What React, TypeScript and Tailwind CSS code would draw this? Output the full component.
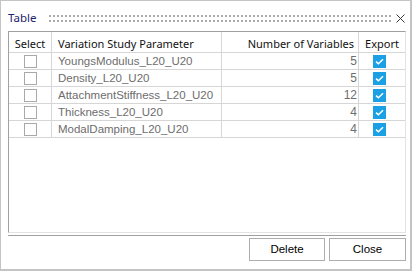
import { Fragment } from "react";

const rows = [
  { name: "YoungsModulus_L20_U20", count: 5 },
  { name: "Density_L20_U20", count: 5 },
  { name: "AttachmentStiffness_L20_U20", count: 12 },
  { name: "Thickness_L20_U20", count: 4 },
  { name: "ModalDamping_L20_U20", count: 4 },
];

const ui = { fontFamily: '"Noto Sans", "Open Sans", sans-serif' };
const arial = { fontFamily: '"Liberation Sans", Arial, sans-serif' };

function GripDots() {
  return (
    <svg className="h-[7px] flex-1" preserveAspectRatio="none">
      <defs>
        <pattern id="grip" width="4" height="5" patternUnits="userSpaceOnUse">
          <rect x="0" y="0" width="2" height="2" fill="#ababab" />
        </pattern>
      </defs>
      <rect x="0" y="0" width="100%" height="7" fill="url(#grip)" />
    </svg>
  );
}

function CloseX() {
  return (
    <svg width="9" height="9" viewBox="0 0 9 9" className="ml-[3px] mr-[1px]">
      <path d="M0.5 0.5 L8.5 8.5 M8.5 0.5 L0.5 8.5" stroke="#3c3c3c" strokeWidth="1" />
    </svg>
  );
}

function EmptyBox() {
  return <div className="w-[13px] h-[13px] border border-[#a9a9a9] bg-white" />;
}

function CheckedBox() {
  return (
    <div className="w-[13px] h-[13px] bg-[#1ba0e6] flex items-center justify-center">
      <svg width="9" height="7" viewBox="0 0 9 7">
        <path d="M1 3.6 L3.4 5.8 L8 1.2" stroke="white" strokeWidth="1.5" fill="none" />
      </svg>
    </div>
  );
}

export default function App() {
  return (
    <div className="w-[414px] h-[271px] bg-white">
      <div className="w-[412px] h-[271px] border border-[#c4c4c4] border-r-2 border-b-2 bg-white flex flex-col pl-[7px] pr-[4px]">
        {/* title bar */}
        <div className="h-[30px] pt-[4px] flex items-center">
          <span className="text-[11.5px] text-[#23236b] w-[41px]" style={ui}>
            Table
          </span>
          <GripDots />
          <CloseX />
        </div>

        {/* table */}
        <div className="h-[202px] border border-t-[#a0a0a0] border-l-[#a0a0a0] border-b-[#e3e3e3] border-r-[#e3e3e3]">
          <div className="grid grid-cols-[43px_170px_137px_46px]">
            <div className="h-[21px] border-r border-b border-[#d6d6d6] flex items-end justify-center leading-[16px] text-[11px] text-[#111]" style={ui}>
              Select
            </div>
            <div className="h-[21px] border-r border-b border-[#d6d6d6] flex items-end pl-[6px] leading-[16px] text-[11px] text-[#111]" style={ui}>
              Variation Study Parameter
            </div>
            <div className="h-[21px] border-r border-b border-[#d6d6d6] flex items-end justify-end pr-[4px] leading-[16px] text-[11px] text-[#111]" style={ui}>
              Number of Variables
            </div>
            <div className="h-[21px] border-b border-[#d6d6d6] flex items-end justify-center leading-[16px] text-[11px] text-[#111]" style={ui}>
              Export
            </div>

            {rows.map((r) => (
              <Fragment key={r.name}>
                <div className="h-[17px] border-r border-b border-[#d6d6d6] flex items-center justify-center">
                  <EmptyBox />
                </div>
                <div className="h-[17px] border-r border-b border-[#d6d6d6] flex items-center pl-[6px] leading-[16px] text-[11.5px] text-[#6d6d6d] whitespace-nowrap" style={arial}>
                  {r.name}
                </div>
                <div className="h-[17px] border-r border-b border-[#d6d6d6] flex items-center justify-end pr-[1px] leading-[16px] text-[12px] text-[#6d6d6d]" style={arial}>
                  {r.count}
                </div>
                <div className="h-[17px] border-b border-[#d6d6d6] flex items-center pl-[14px]">
                  <CheckedBox />
                </div>
              </Fragment>
            ))}
          </div>
        </div>

        {/* separator */}
        <div className="mt-[2px] h-[2px] border-t border-[#a0a0a0] bg-white" />

        {/* buttons */}
        <div className="mt-[1px] flex justify-end gap-[4px]">
          <button className="w-[76px] h-[23px] border border-[#adadad] bg-white text-[11.5px] text-black" style={arial}>
            Delete
          </button>
          <button className="w-[77px] h-[23px] border border-[#adadad] bg-white text-[11.5px] text-black" style={arial}>
            Close
          </button>
        </div>
      </div>
    </div>
  );
}
